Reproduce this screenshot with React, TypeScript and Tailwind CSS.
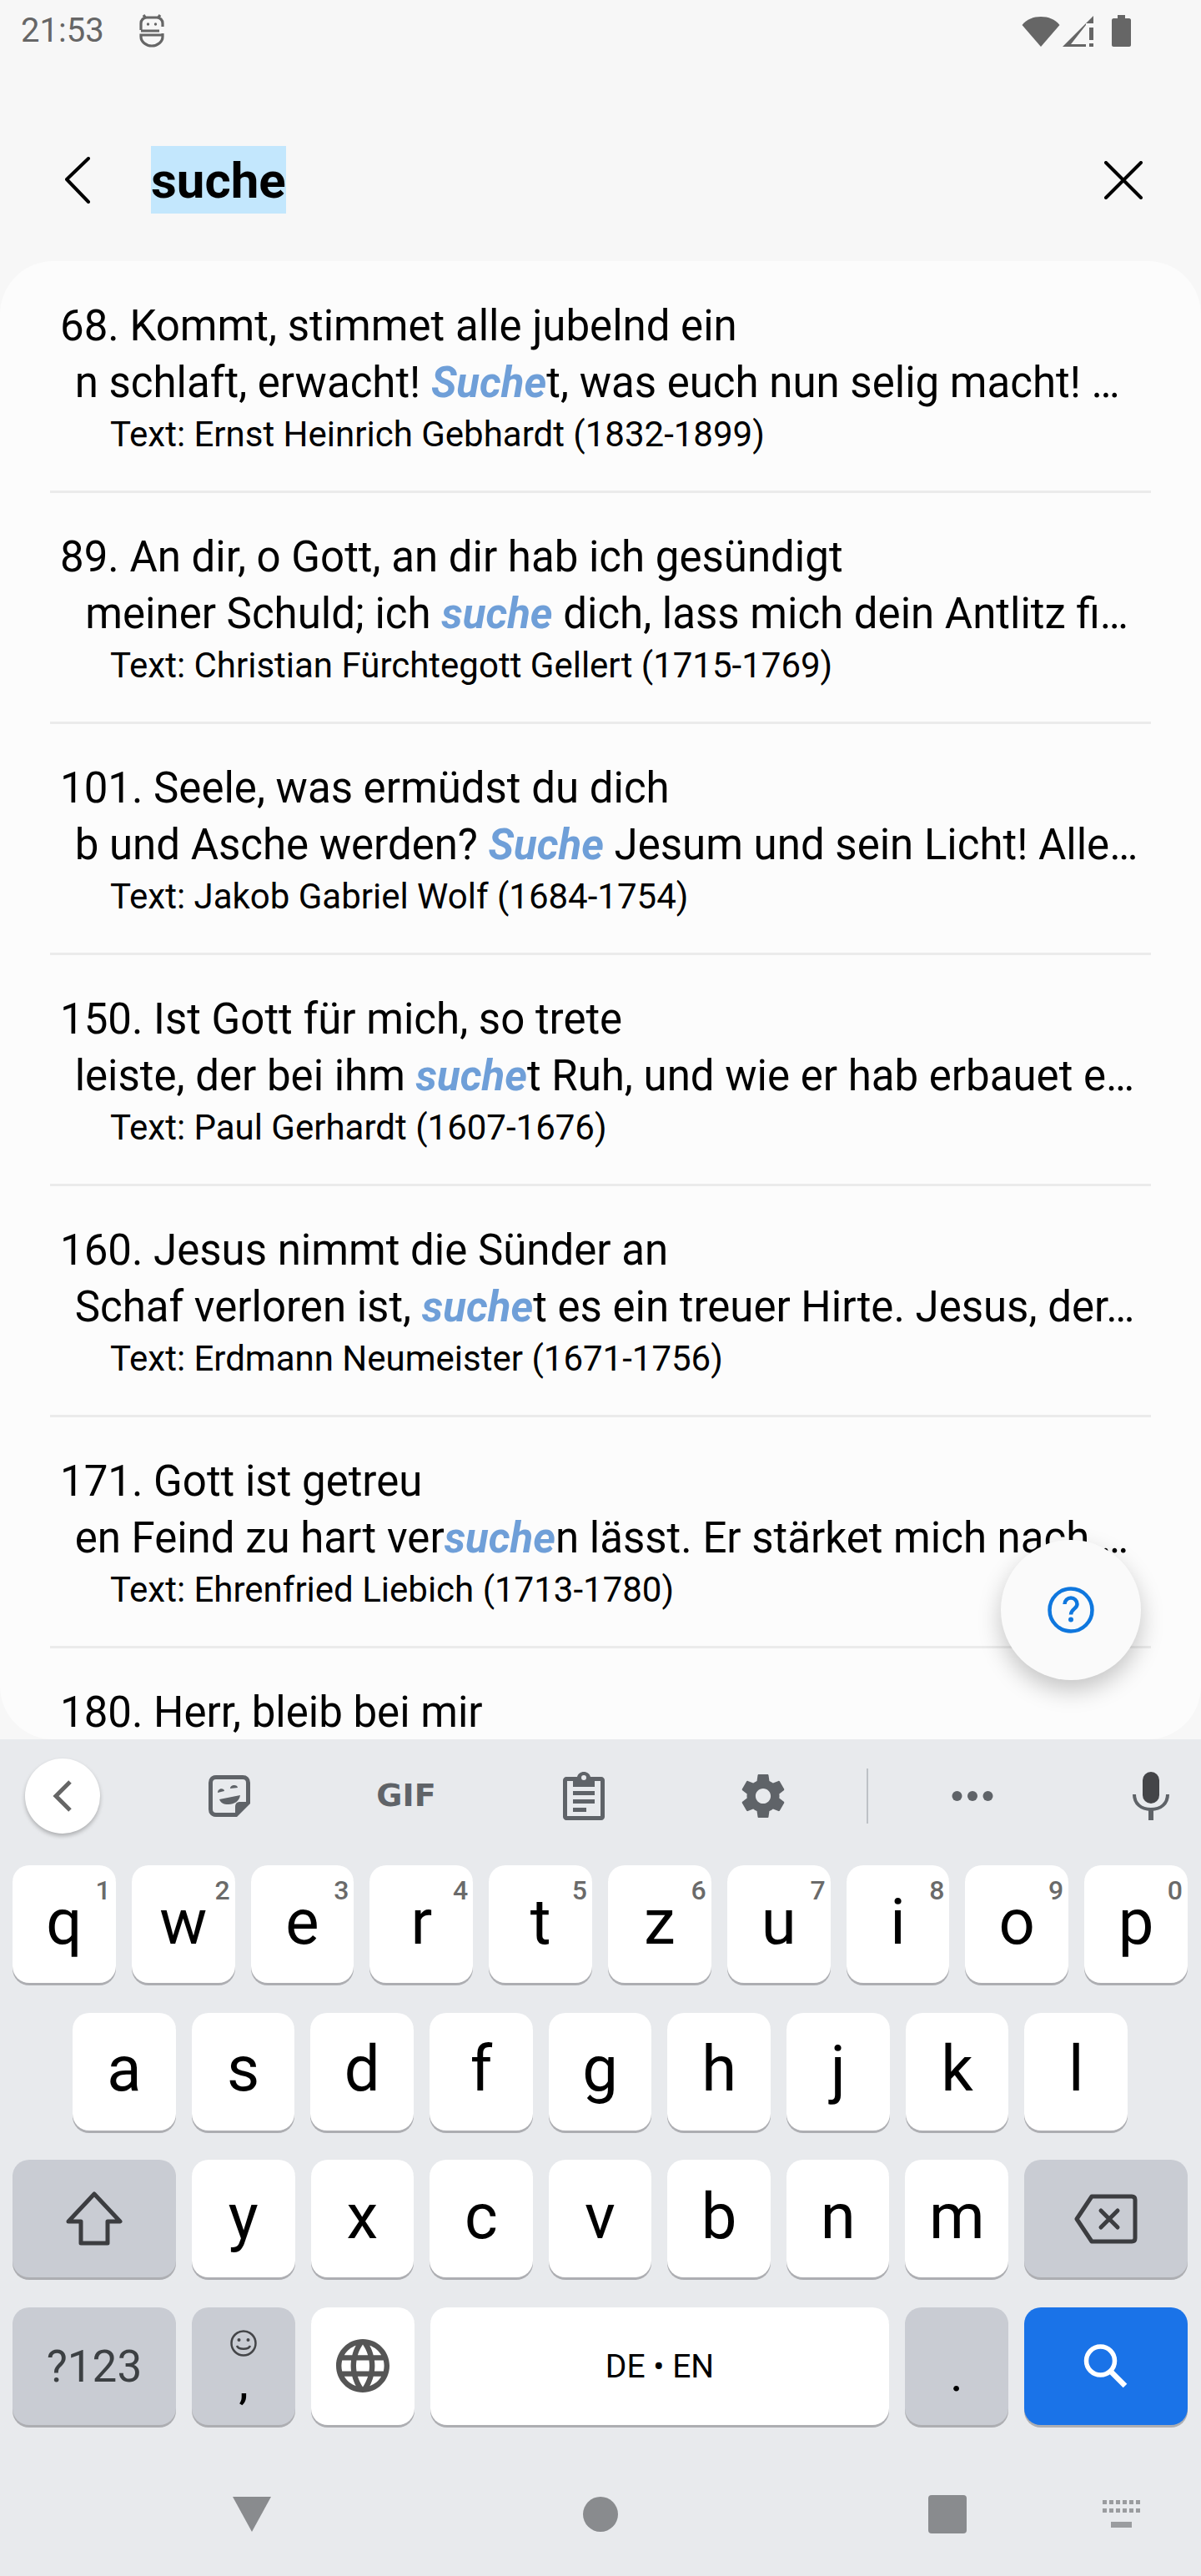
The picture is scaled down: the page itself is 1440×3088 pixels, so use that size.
const results = [
  { title: "68. Kommt, stimmet alle jubelnd ein", before: " n schlaft, erwacht! ", match: "Suche", after: "t, was euch nun selig macht! …", author: "Text: Ernst Heinrich Gebhardt (1832-1899)" },
  { title: "89. An dir, o Gott, an dir hab ich gesündigt", before: "  meiner Schuld; ich ", match: "suche", after: " dich, lass mich dein Antlitz fi…", author: "Text: Christian Fürchtegott Gellert (1715-1769)" },
  { title: "101. Seele, was ermüdst du dich", before: " b und Asche werden? ", match: "Suche", after: " Jesum und sein Licht! Alle…", author: "Text: Jakob Gabriel Wolf (1684-1754)" },
  { title: "150. Ist Gott für mich, so trete", before: " leiste, der bei ihm ", match: "suche", after: "t Ruh, und wie er hab erbauet e…", author: "Text: Paul Gerhardt (1607-1676)" },
  { title: "160. Jesus nimmt die Sünder an", before: " Schaf verloren ist, ", match: "suche", after: "t es ein treuer Hirte. Jesus, der…", author: "Text: Erdmann Neumeister (1671-1756)" },
  { title: "171. Gott ist getreu", before: " en Feind zu hart ver", match: "suche", after: "n lässt. Er stärket mich nach …", author: "Text: Ehrenfried Liebich (1713-1780)" },
];

function ResultRow({ row }: { row: (typeof results)[number] }) {
  return (
    <div className="mx-[60px] h-[277px] shrink-0 border-b-[3px] border-[#ebebeb] pt-[43px] pl-[12px] text-black">
      <div className="whitespace-nowrap text-[51px] leading-[68px]">{row.title}</div>
      <div className="whitespace-pre pl-[5px] text-[51px] leading-[68px]">
        {row.before}
        <span className="font-bold italic text-[#6f9fd8]">{row.match}</span>
        {row.after}
      </div>
      <div className="whitespace-nowrap pl-[60px] text-[42px] leading-[56px]">{row.author}</div>
    </div>
  );
}

function Key({ label, digit }: { label: string; digit?: string }) {
  return (
    <div className="relative flex h-[141px] flex-1 items-center justify-center rounded-[20px] bg-white pb-[6px] text-[76px] leading-none text-black shadow-[0_3px_0_#adaeb2]">
      {label}
      {digit && <span className="absolute top-[8px] right-[6px] text-[32px] leading-[44px] font-medium text-[#6a6a6a]">{digit}</span>}
    </div>
  );
}

function ActionKey({ children, className }: { children: React.ReactNode; className: string }) {
  return (
    <div className={`relative flex h-[141px] shrink-0 items-center justify-center rounded-[20px] shadow-[0_3px_0_#adaeb2] ${className}`}>
      {children}
    </div>
  );
}

function Cell({ children, className = "" }: { children: React.ReactNode; className?: string }) {
  return <div className={`flex h-[90px] shrink-0 items-center justify-center ${className}`}>{children}</div>;
}

export default function App() {
  return (
    <div className="relative flex h-[3088px] w-[1440px] flex-col overflow-hidden bg-[#f7f7f7] font-[Roboto,sans-serif]">
      {/* status bar */}
      <div className="flex h-[72px] shrink-0 items-center pt-[2px] text-[#666666]">
        <span className="ml-[25px] text-[40px] leading-none">21:53</span>
        <svg className="ml-[42px]" width="30" height="40" viewBox="0 0 30 40" fill="none" stroke="#666" strokeWidth="3.2">
          <path d="M5 1 8 5M25 1 22 5M2 19V11C2 7 5 4 9 4H21C25 4 28 7 28 11V15M2 20H24M28 23V27C28 33 22 38 15 38S2 33 2 27V25H28" />
          <circle cx="10.500" cy="12" r="1.700" fill="#666" stroke="none" />
          <circle cx="19.500" cy="12" r="1.700" fill="#666" stroke="none" />
        </svg>
        <svg className="ml-auto" width="46" height="40" viewBox="0 0 46 40" fill="#666">
          <path d="M0.5 13C6 6 14 3 23 3S40 6 45.5 13L23 39Z" />
        </svg>
        <svg className="ml-[3px]" width="38" height="40" viewBox="0 0 38 40" fill="#666">
          <path fillRule="evenodd" d="M0 39 37 2V11H28V13L10 36H28V39Z" />
          <path d="M32 16H37V31H32ZM32 35H37V39H32Z" />
        </svg>
        <svg className="mr-[84px] ml-[21px]" width="23" height="40" viewBox="0 0 23 40" fill="#666">
          <path d="M7 1H16V5H21C22 5 23 6 23 7V37C23 38 22 39 21 39H2C1 39 0 38 0 37V7C0 6 1 5 2 5H7Z" />
        </svg>
      </div>

      {/* search header */}
      <div className="flex h-[241px] shrink-0 items-center pt-[46px]">
        <svg className="ml-[78px]" width="30" height="56" viewBox="0 0 30 56" fill="none" stroke="#000" strokeWidth="4" strokeLinecap="round" strokeLinejoin="round">
          <path d="M28 2 2 27 28 54" />
        </svg>
        <span className="ml-[73px] inline-block h-[81px] bg-[#c3e7fd] pt-[2px] text-[60px] leading-[79px] font-bold text-black">suche</span>
        <svg className="mr-[70px] ml-auto" width="46" height="46" viewBox="0 0 46 46" fill="none" stroke="#000" strokeWidth="4" strokeLinecap="round">
          <path d="M2 2 44 44M44 2 2 44" />
        </svg>
      </div>

      {/* result list */}
      <div className="relative flex min-h-0 flex-1 flex-col overflow-hidden rounded-[64px] bg-[#fcfcfc] pt-[1px]">
        {results.map((row) => (
          <ResultRow key={row.title} row={row} />
        ))}
        <div className="pt-[43px] pl-[72px] text-[51px] leading-[68px] text-black">180. Herr, bleib bei mir</div>
      </div>

      {/* help button */}
      <div className="absolute top-[1846px] left-[1200px] flex size-[168px] items-center justify-center rounded-full bg-[#fafafa] shadow-[0_12px_28px_rgba(0,0,0,0.22)]">
        <svg width="56" height="56" viewBox="0 0 56 56" fill="none">
          <circle cx="28" cy="28" r="25.5" stroke="#0f77de" strokeWidth="4.5" />
          <path d="M20.500 21C20.500 16.500 24 13.500 28 13.500S35.500 16.500 35.500 21C35.500 26.500 28 27 28 33.500" stroke="#0f77de" strokeWidth="4.5" />
          <circle cx="28" cy="39.500" r="3" fill="#0f77de" />
        </svg>
      </div>

      {/* keyboard */}
      <div className="h-[1003px] shrink-0 bg-[#e8eaed]">
        <div className="flex h-[151px] items-center pb-[16px]">
          <Cell className="ml-[30px] w-[90px] rounded-full bg-white shadow-[0_3px_5px_rgba(0,0,0,0.25)]">
            <svg width="24" height="38" viewBox="0 0 24 38" fill="none" stroke="#666" strokeWidth="5">
              <path d="M21 2 4 19 21 36" />
            </svg>
          </Cell>
          <Cell className="ml-[47px] w-[215px]">
            <svg width="50" height="50" viewBox="0 0 50 50">
              <path d="M2.500 9C2.500 5 5 2.500 9 2.500H41C45 2.500 47.500 5 47.500 9V33L33 47.500H9C5 47.500 2.500 45 2.500 41Z" fill="none" stroke="#5f6368" strokeWidth="5" />
              <path d="M32 48V38C32 34 34 32 38 32H49Z" fill="#5f6368" />
              <path d="M11 21C11 15 19 15 19 19ZM26 16C26 11 35 11 35 15Z" fill="#5f6368" />
              <path d="M13 29 38 24C37 31 31 35 24 35S15 33 13 29Z" fill="#5f6368" />
            </svg>
          </Cell>
          <Cell className="w-[210px] font-['DejaVu_Sans',sans-serif] text-[38px] font-bold text-[#5f6368]">GIF</Cell>
          <Cell className="w-[215px]">
            <svg width="50" height="58" viewBox="0 0 50 58">
              <path fillRule="evenodd" d="M4 6H17C18 2.500 21 0 25 0S32 2.500 33 6H46C48 6 50 8 50 10V54C50 56 48 58 46 58H4C2 58 0 56 0 54V10C0 8 2 6 4 6ZM5 11V53H45V11H38V18H12V11ZM25 4A3 3 0 1 0 25 10 3 3 0 1 0 25 4Z" fill="#5f6368" />
              <path d="M12 23H38V28H12ZM12 33H38V38H12ZM12 43H28V48H12Z" fill="#5f6368" />
            </svg>
          </Cell>
          <Cell className="w-[215px]">
            <svg width="52" height="52" viewBox="2 2 20 20" fill="#5f6368">
              <path d="M19.430 12.980c.04-.32.07-.64.07-.98s-.03-.66-.07-.98l2.110-1.650c.19-.15.24-.42.12-.64l-2-3.460c-.12-.22-.39-.3-.61-.22l-2.490 1c-.52-.4-1.080-.73-1.690-.98l-.38-2.650C14.460 2.180 14.250 2 14 2h-4c-.25 0-.46.18-.49.42l-.38 2.650c-.61.25-1.170.59-1.690.98l-2.490-1c-.23-.09-.49 0-.61.22l-2 3.460c-.13.22-.07.49.12.64l2.110 1.650c-.04.32-.07.65-.07.98s.03.66.07.98l-2.110 1.650c-.19.15-.24.42-.12.64l2 3.460c.12.22.39.3.61.22l2.490-1c.52.4 1.080.73 1.690.98l.38 2.650c.03.24.24.42.49.42h4c.25 0 .46-.18.49-.42l.38-2.650c.61-.25 1.170-.59 1.690-.98l2.490 1c.23.09.49 0 .61-.22l2-3.460c.12-.22.07-.49-.12-.64l-2.110-1.650zM12 15.500c-1.930 0-3.500-1.570-3.500-3.500s1.570-3.500 3.500-3.500 3.500 1.570 3.500 3.500-1.570 3.500-3.500 3.500z" />
            </svg>
          </Cell>
          <div className="mx-[17px] h-[66px] w-[2px] shrink-0 bg-[#bdc1c6]" />
          <Cell className="w-[215px]">
            <svg width="50" height="14" viewBox="0 0 50 14" fill="#5f6368">
              <circle cx="6.500" cy="7" r="6" />
              <circle cx="25" cy="7" r="6" />
              <circle cx="43.500" cy="7" r="6" />
            </svg>
          </Cell>
          <Cell className="ml-[85px] w-[44px]">
            <svg width="44" height="58" viewBox="0 0 44 58">
              <rect x="12" y="0" width="20" height="38" rx="10" fill="#444548" />
              <path d="M2 27C2 38 10 45 22 45S42 38 42 27" fill="none" stroke="#5f6368" strokeWidth="4" />
              <rect x="19" y="44" width="6" height="14" fill="#5f6368" />
            </svg>
          </Cell>
        </div>

        <div className="flex flex-col gap-[35.500px]">
          <div className="flex gap-[19px] pr-[16px] pl-[15px]">
            {"qwertzuiop".split("").map((k, i) => (
              <Key key={k} label={k} digit={String((i + 1) % 10)} />
            ))}
          </div>
          <div className="flex gap-[19px] pr-[88px] pl-[87px]">
            {"asdfghjkl".split("").map((k) => (
              <Key key={k} label={k} />
            ))}
          </div>
          <div className="flex gap-[19px] pr-[16px] pl-[15px]">
            <ActionKey className="w-[196px] bg-[#c9ccd3]">
              <svg width="68" height="66" viewBox="0 0 68 66" fill="none" stroke="#3c3d40" strokeWidth="5" strokeLinejoin="round">
                <path d="M34 3 65 36H50V62H18V36H3Z" />
              </svg>
            </ActionKey>
            {"yxcvbnm".split("").map((k) => (
              <Key key={k} label={k} />
            ))}
            <ActionKey className="w-[196px] bg-[#c9ccd3]">
              <svg width="76" height="60" viewBox="0 0 76 60" fill="none" stroke="#3c3d40" strokeWidth="5" strokeLinejoin="round">
                <path d="M21 3H69C71.500 3 73 4.500 73 7V53C73 55.500 71.500 57 69 57H21L3 30Z" />
                <path d="M32 20 52 40M52 20 32 40" strokeLinecap="round" />
              </svg>
            </ActionKey>
          </div>
          <div className="flex gap-[19px] pr-[16px] pl-[15px]">
            <ActionKey className="w-[196px] bg-[#c9ccd3] pt-[4px] text-[53px] text-[#3c4043]">?123</ActionKey>
            <ActionKey className="w-[124px] flex-col bg-[#c9ccd3] text-black">
              <svg width="34" height="34" viewBox="0 0 34 34" fill="none" stroke="#444548" strokeWidth="2.500">
                <circle cx="17" cy="17" r="14.500" />
                <circle cx="11.500" cy="13" r="2" fill="#444548" stroke="none" />
                <circle cx="22.500" cy="13" r="2" fill="#444548" stroke="none" />
                <path d="M9 20C11 25 23 25 25 20" />
              </svg>
              <span className="mt-[10px] text-[52px] leading-[44px] font-medium">,</span>
            </ActionKey>
            <ActionKey className="w-[124px] bg-white">
              <svg width="64" height="64" viewBox="2 2 20 20" fill="#555">
                <path d="M11.990 2C6.470 2 2 6.480 2 12s4.470 10 9.990 10C17.520 22 22 17.520 22 12S17.520 2 11.990 2zm6.930 6h-2.950c-.32-1.250-.78-2.450-1.380-3.560 1.840.63 3.370 1.910 4.330 3.560zM12 4.040c.83 1.200 1.480 2.530 1.910 3.960h-3.820c.43-1.430 1.080-2.760 1.910-3.960zM4.260 14C4.100 13.360 4 12.690 4 12s.1-1.360.26-2h3.380c-.08.66-.14 1.320-.14 2 0 .68.06 1.340.14 2H4.260zm.82 2h2.950c.32 1.250.78 2.450 1.380 3.560-1.840-.63-3.370-1.900-4.330-3.560zm2.950-8H5.080c.96-1.660 2.490-2.930 4.330-3.560C8.810 5.550 8.350 6.750 8.030 8zM12 19.960c-.83-1.200-1.480-2.530-1.910-3.960h3.820c-.43 1.430-1.080 2.760-1.910 3.960zM14.340 14H9.660c-.09-.66-.16-1.320-.16-2 0-.68.07-1.350.16-2h4.680c.09.65.16 1.320.16 2 0 .68-.07 1.340-.16 2zm.25 5.560c.6-1.110 1.060-2.310 1.380-3.560h2.950c-.96 1.650-2.490 2.930-4.330 3.560zM16.360 14c.08-.66.14-1.320.14-2 0-.68-.06-1.340-.14-2h3.380c.16.64.26 1.310.26 2s-.1 1.360-.26 2h-3.380z" />
              </svg>
            </ActionKey>
            <ActionKey className="min-w-0 flex-1 bg-white pt-[3px] text-[39px] text-black">DE • EN</ActionKey>
            <ActionKey className="w-[124px] bg-[#c9ccd3] pt-[20px] text-[60px] text-black">.</ActionKey>
            <ActionKey className="w-[196px] bg-[#1a73e8]">
              <svg width="56" height="56" viewBox="0 0 56 56" fill="none" stroke="#fff" strokeWidth="5.500">
                <circle cx="21.500" cy="22" r="17" />
                <path d="M34 35 51 52" strokeWidth="6.500" />
              </svg>
            </ActionKey>
          </div>
        </div>

        {/* nav bar */}
        <div className="flex h-[146px] items-center pt-[68px]">
          <svg className="ml-[278px]" width="48" height="44" viewBox="0 0 48 44" fill="#898b8e">
            <path d="M1 1H47L24 43Z" />
          </svg>
          <div className="ml-[373px] size-[42px] rounded-full bg-[#898b8e]" />
          <div className="ml-[372px] size-[46px] rounded-[4px] bg-[#898b8e]" />
          <svg className="ml-[163px]" width="46" height="34" viewBox="0 0 46 34" fill="#9a9c9f">
            <path d="M0 0H5V5H0ZM8 0H13V5H8ZM16 0H21V5H16ZM24 0H29V5H24ZM32 0H37V5H32ZM40 0H45V5H40ZM0 10H5V15H0ZM8 10H13V15H8ZM16 10H21V15H16ZM24 10H29V15H24ZM32 10H37V15H32ZM40 10H45V15H40ZM10 26H35V33H10Z" />
          </svg>
        </div>
      </div>
    </div>
  );
}
